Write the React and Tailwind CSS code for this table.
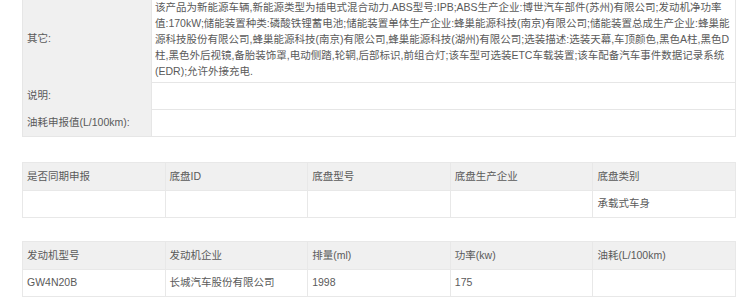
import React from "react";

const font = {
  fontFamily: '"Liberation Sans", "Noto Sans CJK SC", sans-serif',
};

function Row({ label, children, h, first }) {
  return (
    <div className="flex">
      <div className="w-[128px] shrink-0 bg-[#f0f0f0] flex items-center pl-[4px]">
        {label}
      </div>
      <div
        className={`flex-1 bg-white border-l border-[#e6e6e6] pl-[3px] ${
          first ? "" : "border-t"
        } ${h}`}
      >
        {children}
      </div>
    </div>
  );
}

function Grid5({ head, body, className }) {
  return (
    <div
      className={`w-[714px] border border-[#e8e8e8] bg-[#e8e8e8] grid grid-cols-5 gap-px ${className}`}
    >
      {head.map((t, i) => (
        <div
          key={"h" + i}
          className="h-[27px] bg-[#f0f0f0] flex items-center pl-[4px] whitespace-nowrap"
        >
          {t}
        </div>
      ))}
      {body.map((t, i) => (
        <div
          key={"b" + i}
          className="h-[26px] bg-white flex items-center pl-[4px] whitespace-nowrap"
        >
          {t}
        </div>
      ))}
    </div>
  );
}

export default function App() {
  const lines = [
    "该产品为新能源车辆,新能源类型为插电式混合动力.ABS型号:IPB;ABS生产企业:博世汽车部件(苏州)有限公司;发动机净功率",
    "值:170kW;储能装置种类:磷酸铁锂蓄电池;储能装置单体生产企业:蜂巢能源科技(南京)有限公司;储能装置总成生产企业:蜂巢能",
    "源科技股份有限公司,蜂巢能源科技(南京)有限公司,蜂巢能源科技(湖州)有限公司;选装描述:选装天幕,车顶颜色,黑色A柱,黑色D",
    "柱,黑色外后视镜,备胎装饰罩,电动侧踏,轮辋,后部标识,前组合灯;该车型可选装ETC车载装置;该车配备汽车事件数据记录系统",
    "(EDR);允许外接充电.",
  ];
  return (
    <div
      className="w-[750px] h-[307px] overflow-hidden bg-white text-[10.5px] text-[#5a5a5a]"
      style={font}
    >
      <div className="ml-[22px] -mt-[6px] w-[714px] border border-[#e6e6e6]">
        <Row label="其它:" h="pt-[4px] pb-[3px] leading-[16px]" first>
          {lines.map((l, i) => (
            <div key={i} className="whitespace-nowrap">
              {l}
            </div>
          ))}
        </Row>
        <Row label="说明:" h="h-[27px]" />
        <Row label="油耗申报值(L/100km):" h="h-[27px]" />
      </div>
      <Grid5
        className="ml-[22px] mt-[25px]"
        head={["是否同期申报", "底盘ID", "底盘型号", "底盘生产企业", "底盘类别"]}
        body={["", "", "", "", "承载式车身"]}
      />
      <Grid5
        className="ml-[22px] mt-[23px]"
        head={["发动机型号", "发动机企业", "排量(ml)", "功率(kw)", "油耗(L/100km)"]}
        body={["GW4N20B", "长城汽车股份有限公司", "1998", "175", ""]}
      />
    </div>
  );
}
